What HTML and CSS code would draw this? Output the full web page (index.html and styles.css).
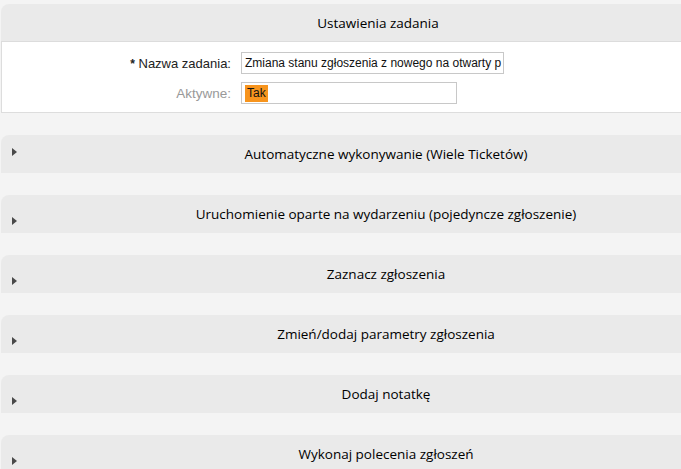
FILE: index.html
```html
<!DOCTYPE html>
<html lang="pl">
<head>
<meta charset="utf-8">
<title>Ustawienia zadania</title>
<link rel="stylesheet" href="styles.css">
</head>
<body>
<div class="page">
  <section class="panel open">
    <div class="panel-head"><h2 class="title">Ustawienia zadania</h2></div>
    <div class="panel-body">
      <div class="row">
        <label class="label req"><span class="star">*</span> Nazwa zadania:</label>
        <div class="field wide">Zmiana stanu zgłoszenia z nowego na otwarty p</div>
      </div>
      <div class="row">
        <label class="label muted">Aktywne:</label>
        <div class="field short"><span class="tag">Tak</span></div>
      </div>
    </div>
  </section>

  <section class="panel closed first">
    <div class="panel-head"><span class="arrow"></span><h2 class="title">Automatyczne wykonywanie (Wiele Ticketów)</h2></div>
  </section>
  <section class="panel closed">
    <div class="panel-head"><span class="arrow"></span><h2 class="title">Uruchomienie oparte na wydarzeniu (pojedyncze zgłoszenie)</h2></div>
  </section>
  <section class="panel closed">
    <div class="panel-head"><span class="arrow"></span><h2 class="title">Zaznacz zgłoszenia</h2></div>
  </section>
  <section class="panel closed">
    <div class="panel-head"><span class="arrow"></span><h2 class="title">Zmień/dodaj parametry zgłoszenia</h2></div>
  </section>
  <section class="panel closed">
    <div class="panel-head"><span class="arrow"></span><h2 class="title">Dodaj notatkę</h2></div>
  </section>
  <section class="panel closed">
    <div class="panel-head"><span class="arrow"></span><h2 class="title">Wykonaj polecenia zgłoszeń</h2></div>
  </section>
</div>
</body>
</html>
```

FILE: styles.css
```css
html, body {
  margin: 0;
  padding: 0;
  overflow: hidden;
  background: #f4f4f4;
}
body {
  width: 681px;
  height: 469px;
  font-family: "Segoe UI", "Open Sans", "Noto Sans", sans-serif;
  color: #000;
}
.page {
  padding: 4px 0 0 1px;
  display: flex;
  flex-direction: column;
  gap: 22px;
  width: 754px;
}
.panel {
  width: 754px;
}
.panel-head {
  height: 37px;
  background: #eaeaea;
  border-top-left-radius: 8px;
  display: flex;
  align-items: center;
  position: relative;
}
.open .panel-head {
  border-bottom: 1px solid #dcdcdc;
}
.closed .panel-head {
  height: 38px;
  padding-left: 16px;
}
.title {
  flex: 1;
  margin: 0;
  padding-top: 2px;
  text-align: center;
  font-size: 13.5px;
  font-weight: normal;
  line-height: 1;
  color: #000;
}
.arrow {
  position: absolute;
  left: 11px;
  top: 22px;
  width: 0;
  height: 0;
  border-top: 4px solid transparent;
  border-bottom: 4px solid transparent;
  border-left: 5px solid #4a4a4a;
}
.first .arrow {
  top: 13px;
}
.panel-body {
  background: #fff;
  border: 1px solid #dddddd;
  border-top: 0;
  padding: 10px 0 8px;
  display: flex;
  flex-direction: column;
  gap: 8px;
}
.row {
  display: flex;
  align-items: center;
  gap: 10px;
}
.label {
  width: 229px;
  text-align: right;
  font-family: "Liberation Sans", Arial, sans-serif;
  font-size: 13px;
  color: #222;
}
.star {
  font-weight: bold;
  font-size: 12px;
}
.muted {
  color: #999;
  font-size: 13.5px;
}
.field {
  box-sizing: border-box;
  height: 22px;
  border: 1px solid #c8c8c8;
  background: #fff;
  font-family: "Liberation Sans", Arial, sans-serif;
  font-size: 12px;
  color: #111;
  display: flex;
  align-items: center;
  padding: 0 3px;
  white-space: nowrap;
  overflow: hidden;
}
.wide { width: 263px; }
.short { width: 216px; }
.tag {
  background: #f7941d;
  color: #111;
  padding: 1px 2px 2px 2px;
}
```
